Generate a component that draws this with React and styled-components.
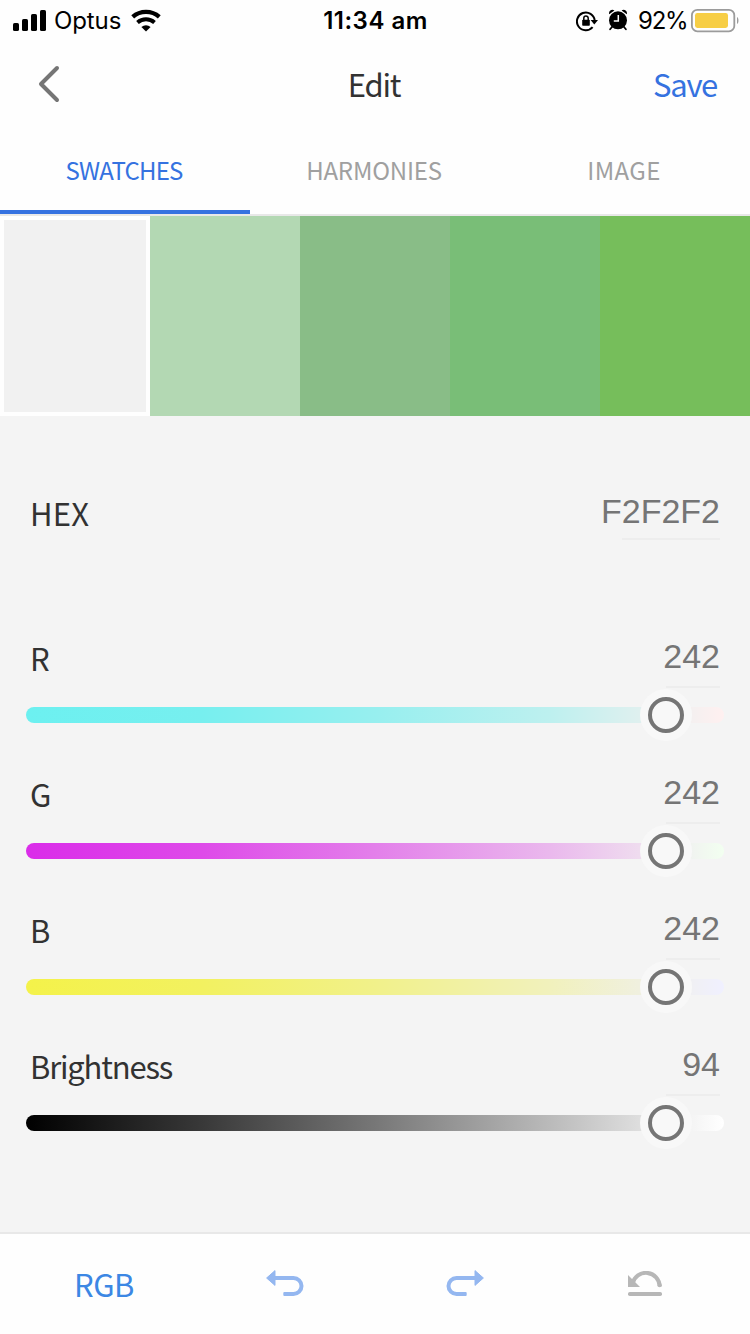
import React, { useState } from 'react'
import styled, { createGlobalStyle } from 'styled-components';

const GlobalStyle = createGlobalStyle`
  *, *::after {
    box-sizing: border-box;
  }
  body {
    margin: 0;
    background: #fefefe;
    font-family: "Noto Sans CJK SC", "Noto Sans", sans-serif;
  }
`;
const Screen = styled.div`
  width: 750px;
  height: 1334px;
  display: flex;
  flex-direction: column;
  background: #fefefe;
  overflow: hidden;
`;
const StatusBar = styled.div`
  height: 40px;
  display: grid;
  grid-template-columns: 1fr auto 1fr;
  align-items: center;
  padding: 0 11px 0 13px;
  font-family: Inter, sans-serif;
  font-size: 24px;
  line-height: 42px;
  color: #000;
`;
const StatusGroup = styled.div`
  display: flex;
  align-items: center;
  justify-content: ${({ $end }) => ($end ? 'flex-end' : 'flex-start')};
  height: 40px;
`;
const Carrier = styled.span`
  width: 67px;
  margin: 0 10px 0 7px;
  letter-spacing: -0.1px;
`;
const Clock = styled.span`
  padding-right: 1px;
  font-weight: 600;
  letter-spacing: 0.5px;
`;
const Percent = styled.span`
  width: 50px;
  margin: 0 3px 0 10px;
  letter-spacing: -1.2px;
`;
const Icon = styled.svg`
  display: block;
  flex: none;
`;
const IconPair = styled.div`
  display: flex;
  align-items: center;
  gap: 10px;
`;
const Header = styled.header`
  height: 88px;
  display: grid;
  grid-template-columns: 1fr auto 1fr;
  align-items: center;
  padding: 0 33px 0 31px;
`;
const Title = styled.h1`
  margin: 0;
  font-size: 31px;
  font-weight: 400;
  line-height: 44px;
  letter-spacing: -1.2px;
  color: #323232;
`;
const TextButton = styled.button`
  justify-self: end;
  padding: 0;
  border: 0;
  background: none;
  font-family: inherit;
  font-size: 31px;
  line-height: 44px;
  letter-spacing: ${({ $spacing }) => $spacing || '-1.3px'};
  color: ${({ $color }) => $color || '#3572e0'};
`;
const IconButton = styled.button`
  display: flex;
  padding: 0;
  border: 0;
  background: none;
`;
const BackButton = styled(IconButton)`
  padding-left: 5px;
`;
const Tabs = styled.nav`
  height: 88px;
  display: grid;
  grid-template-columns: repeat(3, 1fr);
  border-bottom: 2px solid #e8e8e8;
`;
const Tab = styled.button`
  padding: 0 2px 0 0;
  border: 0;
  border-bottom: 4px solid ${({ $active }) => ($active ? '#3572e0' : 'transparent')};
  background: none;
  font-family: inherit;
  font-size: 24px;
  letter-spacing: ${({ $spacing }) => $spacing}px;
  color: ${({ $active }) => ($active ? '#3572e0' : '#a0a0a0')};
`;
const Swatches = styled.div`
  height: 200px;
  display: grid;
  grid-template-columns: repeat(5, 1fr);
`;
const Swatch = styled.div`
  background: ${({ $color }) => $color};
  border: ${({ $selected }) => ($selected ? '4px solid #fefefe' : '0')};
`;
const Panel = styled.main`
  flex: 1;
  padding: 75px 26px 0;
  background: #f4f4f4;
`;
const FieldHead = styled.div`
  height: ${({ $height }) => $height || 52}px;
  display: flex;
  justify-content: space-between;
  padding: 0 4px;
`;
const HexField = styled.section`
  margin-bottom: 96px;
`;
const Label = styled.span`
  font-size: 31px;
  line-height: 43px;
  letter-spacing: ${({ $tight }) => ($tight ? '-1.2px' : '0.2px')};
  color: #323232;
`;
const Value = styled.span`
  width: ${({ $width }) => $width || 54}px;
  display: flex;
  justify-content: flex-end;
  border-bottom: 2px solid #ededed;
  font-family: "Liberation Sans", sans-serif;
  font-size: 34px;
  line-height: 40px;
  white-space: nowrap;
  color: #757575;
`;
const Channel = styled.section`
  height: 136px;
`;
const Slider = styled.div`
  position: relative;
  height: 52px;
  margin-top: 1px;
  display: flex;
  align-items: center;
`;
const Track = styled.div`
  flex: 1;
  height: 16px;
  border-radius: 8px;
  background: linear-gradient(to right, ${({ $stops }) => $stops});
`;
const Thumb = styled.div`
  position: absolute;
  top: 0;
  width: 52px;
  height: 52px;
  margin-left: -26px;
  display: flex;
  align-items: center;
  justify-content: center;
  border-radius: 50%;
  background: #f8f8f8;

  &::after {
    content: "";
    width: 36px;
    height: 36px;
    border: 4px solid #757575;
    border-radius: 50%;
  }
`;
const Toolbar = styled.footer`
  height: 102px;
  display: grid;
  grid-template-columns: repeat(4, 180px);
  justify-content: center;
  align-items: center;
  border-top: 2px solid #e8e8e8;

  & > * {
    justify-self: center;
  }
`;
const ModeButton = styled(TextButton)`
  padding-right: 2px;
`;

const tabs = [
    { name: 'SWATCHES', spacing: -0.8 },
    { name: 'HARMONIES', spacing: -0.2 },
    { name: 'IMAGE', spacing: 0.4 },
];
const swatches = ['#f1f1f1', '#b3d8b3', '#89bd87', '#79be77', '#76be5b'];
const channels = [
    { name: 'R', value: 242, ratio: 0.949, stops: '#6cf0f0, #77efef 25%, #97efef 50%, #bdf0ef 75%, #dff0ef 88%, #f1f0f0 94%, #fff0f0' },
    { name: 'G', value: 242, ratio: 0.949, stops: '#da2ce9, #de4ae9 25%, #e37fea 50%, #eab8ed 75%, #efdcef 88%, #f0f0f0 94%, #f2fff0' },
    { name: 'B', value: 242, ratio: 0.949, stops: '#f4f24a, #f2f160 25%, #f1f18a 50%, #f1f1bc 75%, #f0f0df 88%, #f0f0f0 94%, #f0f0ff' },
    { name: 'Brightness', value: 94, ratio: 0.949, stops: '#000, #383838 25%, #777 50%, #bababa 75%, #dedede 88%, #f1f1f1 94%, #fff' },
];

const Signal = () => (
    <Icon width="34" height="24" viewBox="0 0 34 24">
        <rect x="0" y="14" width="6" height="8" rx="1.6" />
        <rect x="9" y="10" width="6" height="12" rx="1.6" />
        <rect x="18" y="5" width="6" height="17" rx="1.6" />
        <rect x="27" y="1" width="6" height="21" rx="1.6" />
    </Icon>
);

const Wifi = () => (
    <Icon width="30" height="24" viewBox="0 0 30 24">
        <path d="M1.7 7.9a20.2 20.2 0 0 1 26.6 0" fill="none" stroke="#000" strokeWidth="4.3" />
        <path d="M6.5 13.4a12.9 12.9 0 0 1 17 0" fill="none" stroke="#000" strokeWidth="4" />
        <path d="M10.4 17.9a7 7 0 0 1 9.2 0L15 22.5z" />
    </Icon>
);

const RotationLock = () => (
    <Icon width="22" height="22" viewBox="0 0 22 22">
        <path d="M16.6 17.2A8.9 8.9 0 1 1 18.7 10.5" fill="none" stroke="#000" strokeWidth="2" />
        <path d="M14.6 10h7.4l-3.7 4.6z" />
        <rect x="6.2" y="9.8" width="7.6" height="6" rx="0.8" />
        <path d="M7.8 10.2V8.2a2.2 2.2 0 0 1 4.4 0v2" fill="none" stroke="#000" strokeWidth="1.5" />
    </Icon>
);

const Alarm = () => (
    <Icon width="20" height="24" viewBox="0 0 20 24">
        <circle cx="10" cy="11.3" r="9" />
        <path d="M4.4 17.5l-2.3 2.8M15.6 17.5l2.3 2.8" stroke="#000" strokeWidth="1.8" strokeLinecap="round" />
        <path d="M1.2 5.2C.2 2.6 3.4-.4 6.4 1.4zM18.8 5.2C19.8 2.6 16.6-.4 13.6 1.4z" />
        <path d="M10.3 6v6H5.8" fill="none" stroke="#fefefe" strokeWidth="1.5" />
    </Icon>
);

const Battery = () => (
    <Icon width="48" height="25" viewBox="0 0 48 25">
        <rect x="0.9" y="0.9" width="42.4" height="21.4" rx="5.4" fill="none" stroke="#9b9b9b" strokeWidth="1.8" />
        <rect x="4" y="4" width="33" height="15" rx="2.4" fill="#f7ce45" />
        <path d="M46 8c1.9.9 2 6.1 0 7z" fill="#9b9b9b" />
    </Icon>
);

const Back = () => (
    <Icon width="24" height="38" viewBox="0 0 24 38" fill="none" stroke="#757575" strokeWidth="4" strokeLinecap="round">
        <path d="M21 3L5 19l16 16" strokeLinejoin="round" />
    </Icon>
);

const Undo = ({ flip }) => (
    <Icon width="38" height="28" viewBox="0 0 38 28">
        <g transform={flip ? 'translate(38 0) scale(-1 1)' : undefined}>
            <path d="M9 .6v14.8L.6 8z" fill="#94b7f0" stroke="#94b7f0" strokeLinejoin="round" />
            <path d="M8 8h19.5a8 8 0 0 1 0 16H19" fill="none" stroke="#94b7f0" strokeWidth="4" />
            <rect x="17.3" y="22" width="4" height="4" rx="1" fill="#94b7f0" />
        </g>
    </Icon>
);

const Reset = () => (
    <Icon width="36" height="26" viewBox="0 0 36 26" fill="#b7b7b7">
        <path d="M1 4v12h12z" />
        <path d="M5.6 12.7A13.7 13.7 0 0 1 32.7 15.4" fill="none" stroke="#b7b7b7" strokeWidth="4" />
        <circle cx="32.7" cy="14.2" r="2" />
        <rect x="1" y="21" width="34" height="4" rx="1.8" />
    </Icon>
);

const ChannelSlider = ({ name, value, ratio, stops }) => {
    return <Channel>
        <FieldHead>
            <Label $tight={name.length > 3}>{name}</Label>
            <Value>{value}</Value>
        </FieldHead>
        <Slider>
            <Track $stops={stops} />
            <Thumb style={{ left: Math.round(ratio * 674) }} />
        </Slider>
    </Channel>;
}

const App = () => {
    const [tab, setTab] = useState('SWATCHES');
    const [selected, setSelected] = useState(0);

    return <Screen>
        <GlobalStyle />
        <StatusBar>
            <StatusGroup>
                <Signal />
                <Carrier>Optus</Carrier>
                <Wifi />
            </StatusGroup>
            <Clock>11:34 am</Clock>
            <StatusGroup $end>
                <IconPair>
                    <RotationLock />
                    <Alarm />
                </IconPair>
                <Percent>92%</Percent>
                <Battery />
            </StatusGroup>
        </StatusBar>
        <Header>
            <BackButton aria-label="Back">
                <Back />
            </BackButton>
            <Title>Edit</Title>
            <TextButton>Save</TextButton>
        </Header>
        <Tabs>
            {tabs.map(({ name, spacing }) => (
                <Tab key={name} $active={name === tab} $spacing={spacing} onClick={() => setTab(name)}>{name}</Tab>
            ))}
        </Tabs>
        <Swatches>
            {swatches.map((color, i) => (
                <Swatch key={color} $color={color} $selected={i === selected} onClick={() => setSelected(i)} />
            ))}
        </Swatches>
        <Panel>
            <HexField>
                <FieldHead $height={49}>
                    <Label>HEX</Label>
                    <Value $width={98}>F2F2F2</Value>
                </FieldHead>
            </HexField>
            {channels.map((channel) => (
                <ChannelSlider key={channel.name} {...channel} />
            ))}
        </Panel>
        <Toolbar>
            <ModeButton $color="#3c87e4" $spacing="-0.5px">RGB</ModeButton>
            <IconButton aria-label="Undo">
                <Undo />
            </IconButton>
            <IconButton aria-label="Redo">
                <Undo flip />
            </IconButton>
            <IconButton aria-label="Reset">
                <Reset />
            </IconButton>
        </Toolbar>
    </Screen>;
}

export default App;
